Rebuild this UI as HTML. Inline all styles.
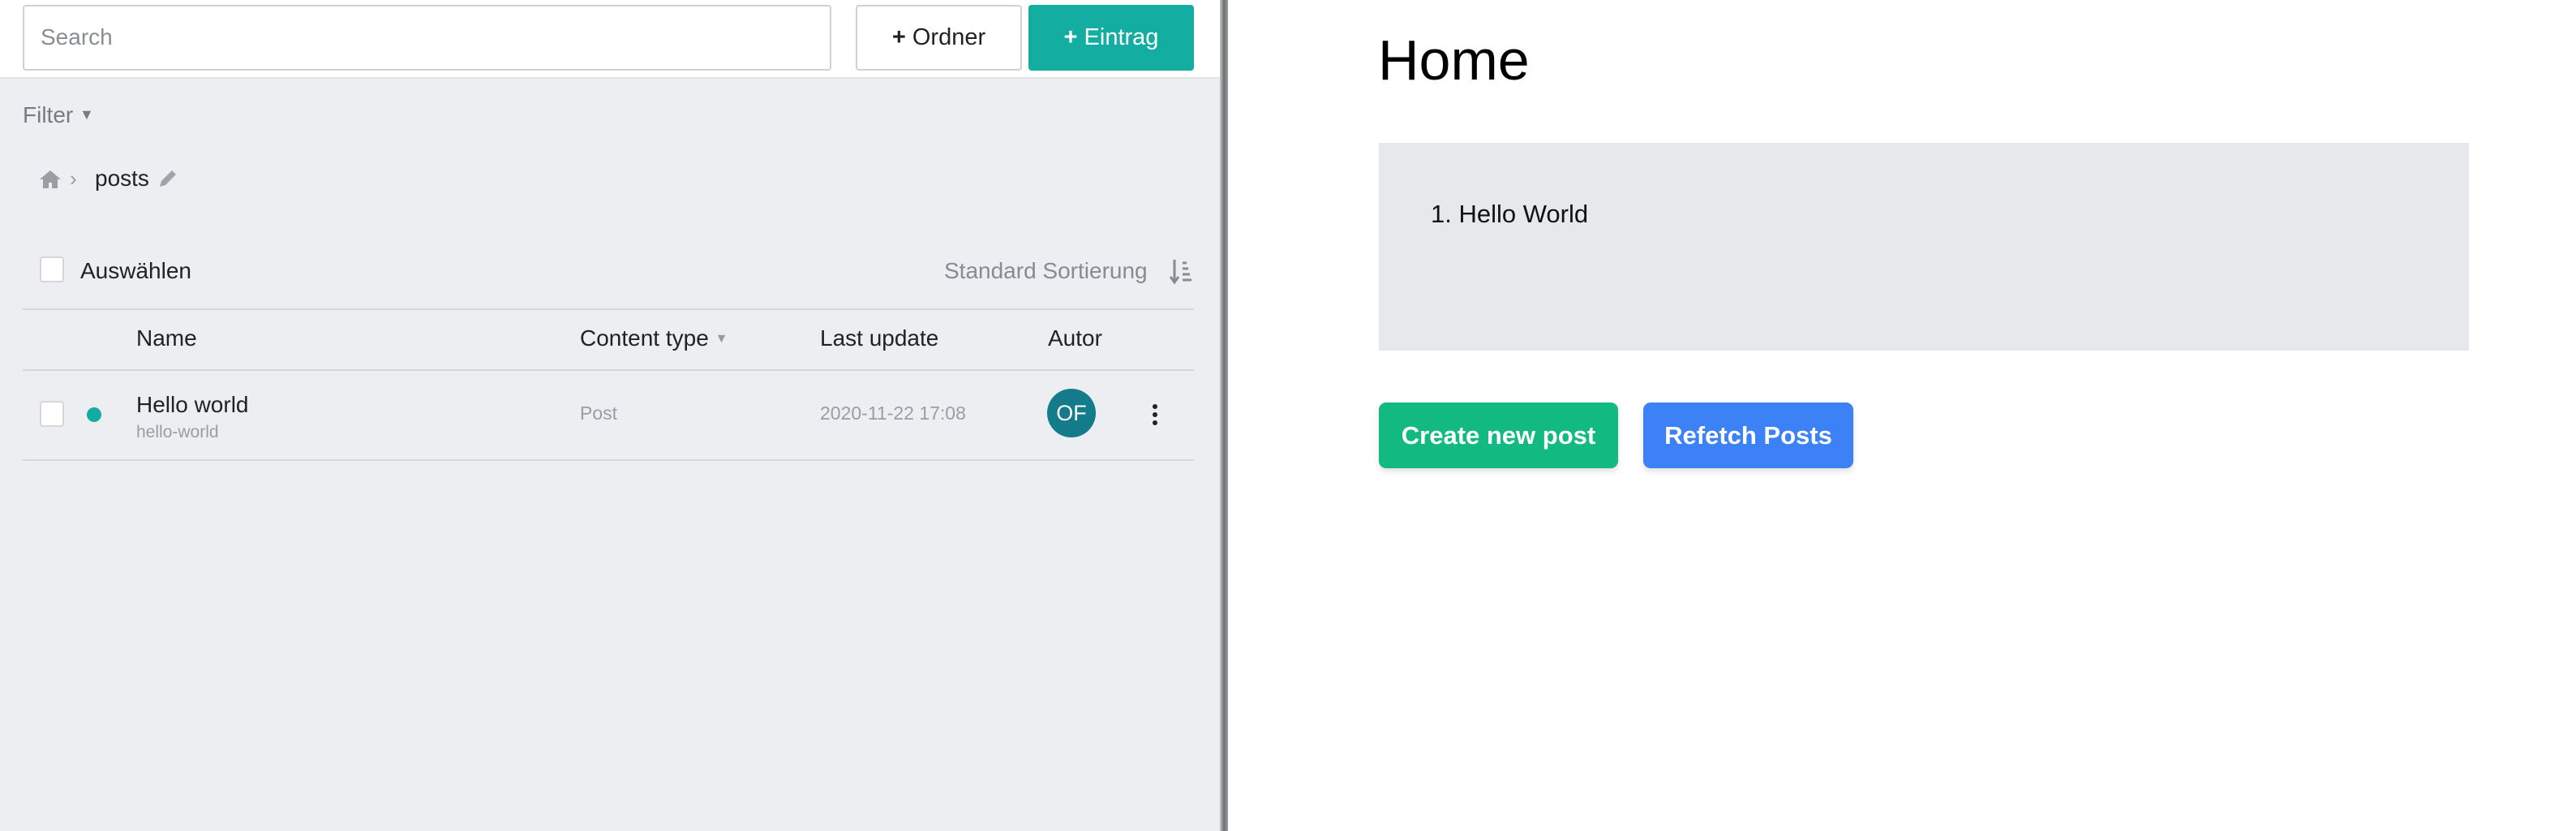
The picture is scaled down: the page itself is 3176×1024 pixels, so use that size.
<!DOCTYPE html>
<html><head><meta charset="utf-8"><style>
*{box-sizing:border-box;margin:0;padding:0}
body{width:3176px;height:1024px;overflow:hidden;background:#fff;font-family:"Liberation Sans",sans-serif;position:relative}
.a{position:absolute;white-space:nowrap}
#left{position:absolute;left:0;top:0;width:1512px;height:1024px;background:#eceef1}
#top{position:absolute;left:0;top:0;width:1512px;height:97px;background:#fff;border-bottom:2px solid #e2e4e8}
.cb{position:absolute;width:30px;height:32px;background:#fff;border:2px solid #d4d6da;border-radius:4px}
.line{position:absolute;left:28px;width:1444px;height:2px;background:#d5d7db}
</style></head><body>
<div id="left">
<div id="top">
 <div class="a" style="left:28px;top:6px;width:997px;height:81px;border:2px solid #cfd1d5;border-radius:4px;background:#fff"></div>
 <div class="a" style="left:50px;top:30px;font-size:28px;color:#8a8d92">Search</div>
 <div class="a" style="left:1055px;top:6px;width:205px;height:81px;border:2px solid #cfd1d5;border-radius:4px;background:#fff;font-size:29px;color:#222;text-align:center;line-height:77px"><b>+</b> Ordner</div>
 <div class="a" style="left:1268px;top:6px;width:204px;height:81px;border-radius:4px;background:#13ada2;font-size:29px;color:#fff;text-align:center;line-height:81px"><b>+</b> Eintrag</div>
</div>
<div class="a" style="left:28px;top:126px;font-size:28px;color:#777a80">Filter <span style="font-size:18px;position:relative;top:-4px">▼</span></div>
<svg class="a" style="left:48px;top:209px" width="28" height="24" viewBox="0 0 28 24"><path d="M14 1L1 12h4v11h7v-7h4v7h7V12h4z" fill="#9a9da2"/></svg>
<div class="a" style="left:86px;top:205px;font-size:26px;color:#9a9da2">›</div>
<div class="a" style="left:117px;top:204px;font-size:28px;color:#222">posts</div>
<svg class="a" style="left:194px;top:207px" width="26" height="26" viewBox="0 0 26 26"><path d="M3 23l2-7L18 3l5 5L10 21z" fill="#a0a3a8"/></svg>
<div class="cb" style="left:49px;top:316px"></div>
<div class="a" style="left:99px;top:318px;font-size:28px;color:#222">Auswählen</div>
<div class="a" style="left:1164px;top:318px;font-size:28px;color:#888b90">Standard Sortierung</div>
<svg class="a" style="left:1442px;top:318px" width="30" height="34" viewBox="0 0 30 34"><path d="M6 2v26M1 23l5 7 5-7" stroke="#888b90" stroke-width="3" fill="none"/><path d="M16 6h5M16 13h7M16 20h9M16 27h11" stroke="#888b90" stroke-width="3"/></svg>
<div class="line" style="top:380px"></div>
<div class="a" style="left:168px;top:401px;font-size:28px;color:#222">Name</div>
<div class="a" style="left:715px;top:401px;font-size:28px;color:#222">Content type <span style="font-size:16px;color:#999;position:relative;top:-4px">▼</span></div>
<div class="a" style="left:1011px;top:401px;font-size:28px;color:#222">Last update</div>
<div class="a" style="left:1292px;top:401px;font-size:28px;color:#222">Autor</div>
<div class="line" style="top:455px"></div>
<div class="cb" style="left:49px;top:494px"></div>
<div class="a" style="left:107px;top:502px;width:18px;height:18px;border-radius:50%;background:#12aca0"></div>
<div class="a" style="left:168px;top:483px;font-size:28px;color:#222">Hello world</div>
<div class="a" style="left:168px;top:521px;font-size:21px;color:#9a9da2">hello-world</div>
<div class="a" style="left:715px;top:496px;font-size:23px;color:#9a9da2">Post</div>
<div class="a" style="left:1011px;top:496px;font-size:23px;color:#9a9da2">2020-11-22 17:08</div>
<div class="a" style="left:1291px;top:479px;width:60px;height:60px;border-radius:50%;background:#137b8a;color:#fff;font-size:27px;text-align:center;line-height:60px">OF</div>
<div class="a" style="left:1421px;top:498px;width:6px;height:6px;border-radius:50%;background:#222;box-shadow:0 10px 0 #222,0 20px 0 #222"></div>
<div class="line" style="top:566px"></div>
</div>
<div class="a" style="left:1504px;top:0;width:10px;height:1024px;background:linear-gradient(90deg,#c9cacc,#6f7072,#9a9b9d)"></div>
<div class="a" style="left:1699px;top:34px;font-size:70px;color:#000">Home</div>
<div class="a" style="left:1700px;top:176px;width:1344px;height:256px;background:#e6e8ec"></div>
<div class="a" style="left:1764px;top:246px;font-size:31px;color:#111">1. Hello World</div>
<div class="a" style="left:1700px;top:496px;width:295px;height:81px;border-radius:9px;background:#12b981;color:#fff;font-size:31px;font-weight:bold;text-align:center;line-height:81px;box-shadow:0 4px 8px rgba(0,0,0,.12)">Create new post</div>
<div class="a" style="left:2026px;top:496px;width:259px;height:81px;border-radius:9px;background:#3c82f6;color:#fff;font-size:31px;font-weight:bold;text-align:center;line-height:81px;box-shadow:0 4px 8px rgba(0,0,0,.12)">Refetch Posts</div>
</body></html>
